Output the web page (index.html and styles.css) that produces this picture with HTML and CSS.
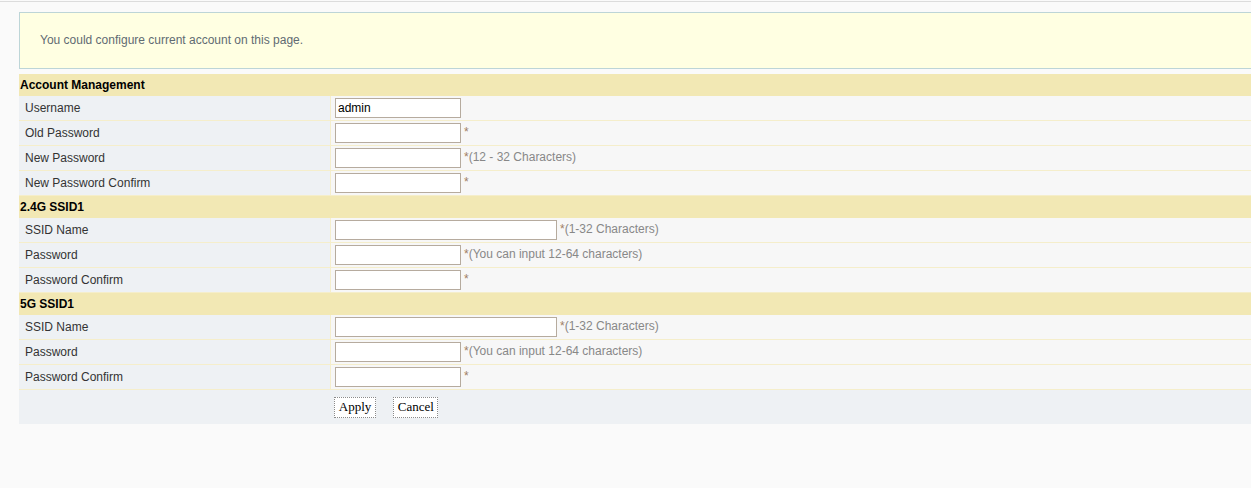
FILE: index.html
```html
<!DOCTYPE html>
<html lang="en">
<head>
  <meta charset="UTF-8">
  <meta name="viewport" content="width=device-width, initial-scale=1.0">
  <link rel="stylesheet" href="styles.css">
  <title>Account Management</title>
</head>
<body>
<div class="topline"></div>
<div class="page">
  <div class="info">You could configure current account on this page.</div>

  <table class="cfg">
    <tr><th colspan="2">Account Management</th></tr>
    <tr>
      <td class="lbl">Username</td>
      <td class="val"><input type="text" value="admin"></td>
    </tr>
    <tr>
      <td class="lbl">Old Password</td>
      <td class="val"><input type="password"><span class="req">*</span></td>
    </tr>
    <tr>
      <td class="lbl">New Password</td>
      <td class="val"><input type="password"><span class="req">*</span><span class="hint">(12 - 32 Characters)</span></td>
    </tr>
    <tr>
      <td class="lbl">New Password Confirm</td>
      <td class="val"><input type="password"><span class="req">*</span></td>
    </tr>

    <tr><th colspan="2">2.4G SSID1</th></tr>
    <tr>
      <td class="lbl">SSID Name</td>
      <td class="val"><input type="text" class="wide"><span class="req">*</span><span class="hint">(1-32 Characters)</span></td>
    </tr>
    <tr>
      <td class="lbl">Password</td>
      <td class="val"><input type="password"><span class="req">*</span><span class="hint">(You can input 12-64 characters)</span></td>
    </tr>
    <tr>
      <td class="lbl">Password Confirm</td>
      <td class="val"><input type="password"><span class="req">*</span></td>
    </tr>

    <tr><th colspan="2">5G SSID1</th></tr>
    <tr>
      <td class="lbl">SSID Name</td>
      <td class="val"><input type="text" class="wide"><span class="req">*</span><span class="hint">(1-32 Characters)</span></td>
    </tr>
    <tr>
      <td class="lbl">Password</td>
      <td class="val"><input type="password"><span class="req">*</span><span class="hint">(You can input 12-64 characters)</span></td>
    </tr>
    <tr>
      <td class="lbl">Password Confirm</td>
      <td class="val"><input type="password"><span class="req">*</span></td>
    </tr>

    <tr class="btnrow">
      <td></td>
      <td>
        <button class="btn apply">Apply</button>
        <button class="btn cancel">Cancel</button>
      </td>
    </tr>
  </table>
</div>
</body>
</html>
```

FILE: styles.css
```css
body{
  margin:0;
  background-color:#fafafa;
  font-family:"Liberation Sans", Arial, sans-serif;
  font-size:12px;
  overflow:hidden;
}
.topline{
  margin-top:1px;
  height:1px;
  background-color:#dcdcdc;
}
.page{
  padding:10px 0 0 19px;
  width:1260px;
}
.info{
  height:55px;
  line-height:55px;
  padding-left:20px;
  border:1px solid #bdd5d7;
  background-color:#ffffe2;
  color:#5f6b72;
}
table.cfg{
  margin-top:5px;
  width:1260px;
  border-collapse:separate;
  border-spacing:0;
}
.cfg th{
  height:22px;
  padding:0 0 0 1px;
  text-align:left;
  font-weight:bold;
  color:#000;
  background-color:#f2e8b4;
}
.cfg td{
  height:24px;
  padding:0;
  border-bottom:1px solid #f5eecb;
}
.cfg td.lbl{
  width:305px;
  padding-left:6px;
  border-right:1px solid #f5eecb;
  background-color:#eef1f4;
  color:#333;
}
.cfg td.val{
  padding-left:4px;
  background-color:#f7f7f7;
  color:#888;
}
.cfg input{
  box-sizing:border-box;
  width:126px;
  height:20px;
  margin:0;
  padding:0 2px;
  border:1px solid #b6ab9e;
  background-color:#fff;
  font-family:"Liberation Sans", Arial, sans-serif;
  font-size:12px;
  color:#000;
  vertical-align:middle;
  outline:none;
}
.cfg input.wide{
  width:222px;
}
.req{
  margin-left:3px;
  color:#a07d64;
}
.hint{
  color:#888;
}
.btnrow td{
  height:34px;
  border-bottom:none;
  background-color:#eef1f4;
}
.btnrow td:last-child{
  padding-left:3px;
}
.btn{
  box-sizing:border-box;
  height:21px;
  margin:0 14px 0 0;
  padding:0;
  border:1px dotted #8a8a8a;
  background-color:#fff;
  font-family:"Liberation Serif", "Times New Roman", serif;
  font-size:13px;
  color:#000;
  vertical-align:middle;
}
.btn.apply{
  width:42px;
}
.btn.cancel{
  width:45px;
}
```
